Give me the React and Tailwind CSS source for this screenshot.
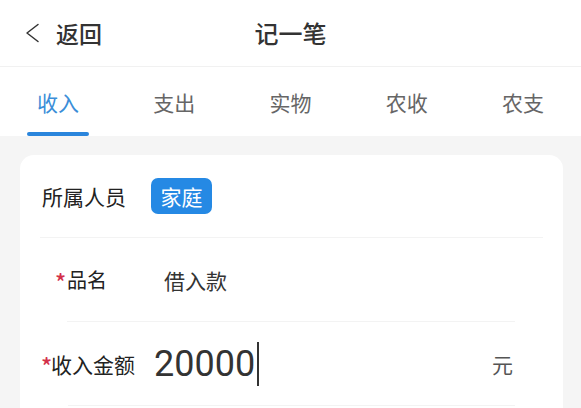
const tabs = ["收入", "支出", "实物", "农收", "农支"];

const cjk = "font-['Noto_Sans_CJK_SC',sans-serif]";

function BackArrow() {
  return (
    <svg width="15" height="20" viewBox="0 0 15 20" fill="none">
      <polyline
        points="13,1.5 2,10 13,18.5"
        stroke="#333"
        strokeWidth="1.5"
        strokeLinecap="round"
        strokeLinejoin="round"
      />
    </svg>
  );
}

export default function App() {
  const active = 0;

  return (
    <div className={`w-[581px] h-[408px] overflow-hidden bg-[#f5f5f5] ${cjk}`}>
      {/* header */}
      <div className="grid grid-cols-3 h-[67px] items-center bg-white border-b border-[#f1f1f1]">
        <button className="flex items-center pl-[25px] text-[#333]">
          <BackArrow />
          <span className="ml-[16px] text-[23px] leading-[24px] font-medium">返回</span>
        </button>
        <div className="text-center text-[24px] leading-[24px] font-medium text-[#333]">记一笔</div>
        <div />
      </div>

      {/* tabs */}
      <div className="grid grid-cols-5 h-[69px] bg-white">
        {tabs.map((t, i) => (
          <button key={t} className="flex flex-col items-center">
            <span
              className={`pt-[23px] text-[21px] leading-[24px] ${
                i === active ? "text-[#3b8ed8]" : "text-[#666]"
              }`}>
              {t}
            </span>
            <span
              className={`mt-[18px] h-[4px] w-[62px] rounded-full ${
                i === active ? "bg-[#2a85dc]" : "bg-transparent"
              }`}
            />
          </button>
        ))}
      </div>

      {/* form card */}
      <div className="pt-[19px] pl-[20px] pr-[18px]">
        <div className="bg-white rounded-[14px] pb-[40px]">
          <div className="mx-[20px] h-[83px] flex items-center pl-[2px] border-b border-[#f3f3f3]">
            <span className="text-[21px] leading-[24px] text-[#222]">所属人员</span>
            <span className="ml-[25px] h-[36px] w-[61px] flex items-center justify-center rounded-[7px] bg-[#2589e4] text-white text-[21px] leading-[24px]">
              家庭
            </span>
          </div>

          <div className="h-[83px] flex items-center pl-[35px]">
            <span className="text-[23px] leading-[24px] font-medium text-[#d3304a] self-start mt-[31px] w-[12px]">*</span>
            <span className="text-[20px] leading-[24px] text-[#222]">品名</span>
            <span className="ml-[57px] text-[21px] leading-[24px] text-[#333]">借入款</span>
          </div>
          <div className="ml-[47px] mr-[48px] h-px bg-[#f3f3f3]" />

          <div className="h-[83px] flex items-center pl-[21px] pr-[50px]">
            <span className="text-[23px] leading-[24px] font-medium text-[#d3304a] self-start mt-[31px] w-[10px]">*</span>
            <span className="text-[21px] leading-[24px] text-[#222]">收入金额</span>
            <span className="ml-[19px] flex items-center">
              <span className="font-['Roboto','Noto_Sans_CJK_SC',sans-serif] text-[36px] leading-[44px] text-[#333]">
                20000
              </span>
              <span className="ml-[2px] w-[1.5px] h-[44px] bg-[#333]" />
            </span>
            <span className="ml-auto text-[21px] leading-[24px] text-[#555]">元</span>
          </div>
          <div className="ml-[48px] mr-[48px] h-px bg-[#f3f3f3]" />
        </div>
      </div>
    </div>
  );
}
